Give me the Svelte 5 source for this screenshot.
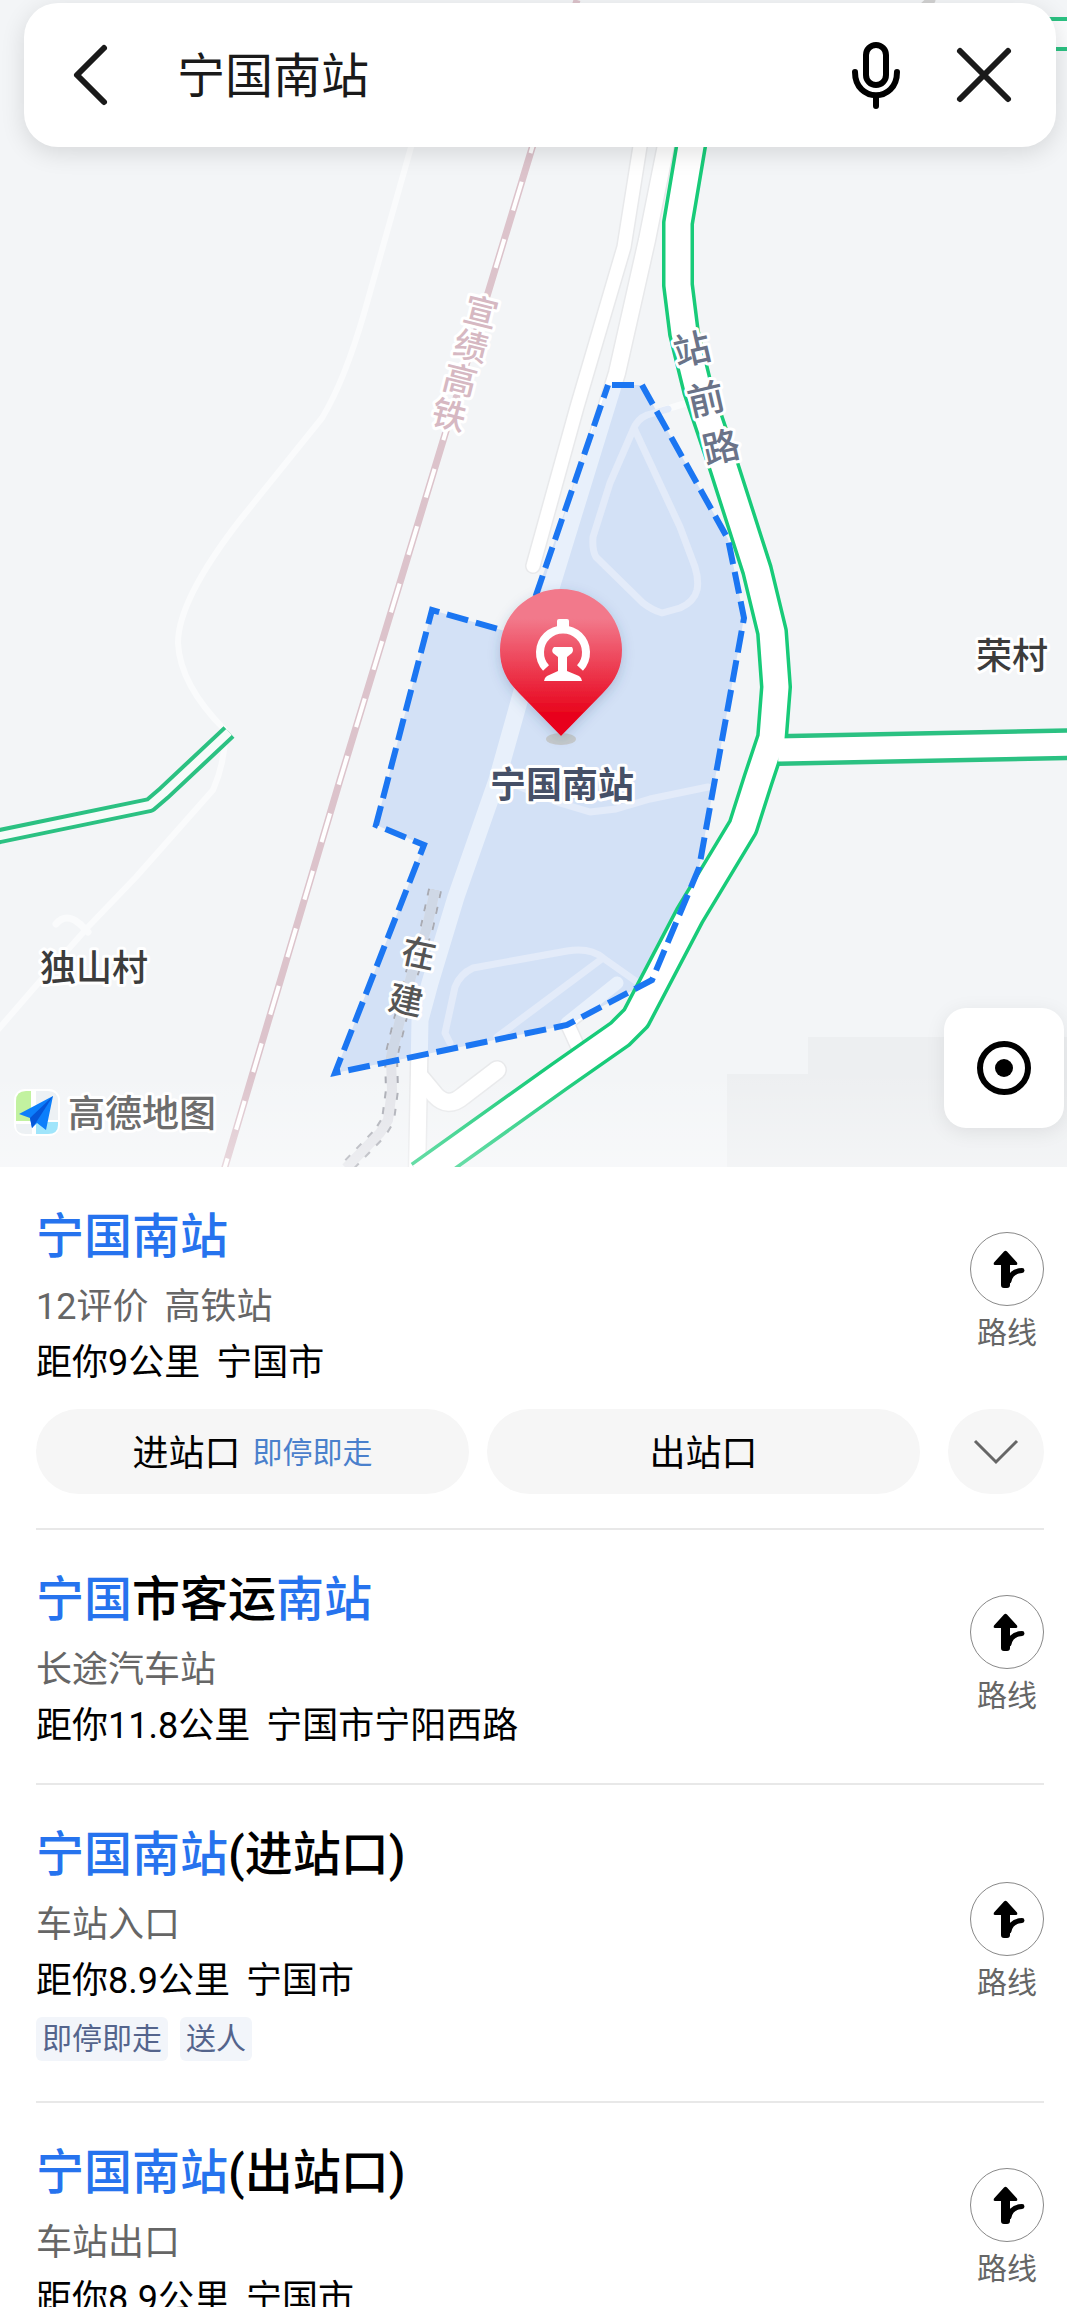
<script>
let query = '宁国南站';
let expanded = false;

const places = [
	{
		title: [['宁国南站', true]],
		info: ['12评价', '高铁站'],
		where: ['距你9公里', '宁国市'],
		gates: [{ name: '进站口', note: '即停即走' }, { name: '出站口' }],
	},
	{
		title: [['宁国', true], ['市客运', false], ['南站', true]],
		info: ['长途汽车站'],
		where: ['距你11.8公里', '宁国市宁阳西路'],
	},
	{
		title: [['宁国南站', true], ['(进站口)', false]],
		info: ['车站入口'],
		where: ['距你8.9公里', '宁国市'],
		tags: ['即停即走', '送人'],
	},
	{
		title: [['宁国南站', true], ['(出站口)', false]],
		info: ['车站出口'],
		where: ['距你8.9公里', '宁国市'],
	},
];

// street names are set one character at a time along the road
const roadLabels = [
	{ kind: 'rail', angle: 14, chars: [['宣', 481, 312], ['绩', 471, 346], ['高', 460, 380], ['铁', 449, 415]] },
	{ kind: 'street', angle: -13, chars: [['站', 692, 349], ['前', 706, 399], ['路', 721, 447]] },
	{ kind: 'planned', angle: 12, chars: [['在', 419, 953], ['建', 406, 1000]] },
];

const area = 'M608 385H642L728 539L744 618L699 868L652 980L567 1025L335 1073L424 845L376 825L432 610L522 636Z';
const mainRoad = 'M692 140L678 223V285L684 333L698 390L724 467L757 570L772 632L776 687L772 738L758 780L743 827L690 915L636 1018L620 1034L560 1076L420 1176';
const sideRoad = 'M778 750L1080 744';
const westRoad = 'M229 732L164 793L150 805L0 836L-10 838';
const roadA = 'M641 140L624 247L577 407L533 566';
const roadB = 'M667 140L647 240L617 373L551 588L497 780L456 897L430 983L420 1020L417 1175';
const hook = 'M420 1077L435 1095Q448 1109 463 1096L497 1070';
const spur = 'M617 983L567 1023L577 1045';
const planned = 'M435 890L427 927L412 973L400 1020L391 1057L392 1090L388 1120L380 1133L346 1168';
</script>

<main>
	<section class="map">
		<svg class="canvas" viewBox="0 0 1067 1167" role="img" aria-label="地图">
			<defs>
				<linearGradient id="pin" x1="0" y1="0" x2="0" y2="1">
					<stop offset="0.2" stop-color="#f2798b" />
					<stop offset="0.85" stop-color="#e8041c" />
				</linearGradient>
				<linearGradient id="fade" x1="0" y1="0" x2="0" y2="1">
					<stop offset="0" stop-color="#fff" stop-opacity="0" />
					<stop offset="1" stop-color="#fff" stop-opacity="0.35" />
				</linearGradient>
				<filter id="soft" x="-30%" y="-30%" width="160%" height="160%">
					<feDropShadow dx="0" dy="4" stdDeviation="6" flood-color="#33507a" flood-opacity="0.25" />
				</filter>
				<clipPath id="inside"><path d={area} /></clipPath>
			</defs>

			<rect width="1067" height="1167" fill="#f3f5f7" />
			<path d="M808 1037H1067V1167H727V1074H808Z" fill="#edeff1" />

			<g class="lane">
				<path d="M413 140L365 310Q345 380 322 418L240 520Q178 600 178 643Q180 685 225 730Q226 760 213 790L136 877L88 927L41 980L-4 1032" stroke="#fafbfc" stroke-width="6" />
				<path d="M56 924Q66 912 80 924L88 932" stroke="#fafbfc" stroke-width="7" />
				<path d="M931 0L918 12" stroke="#d2d2d2" stroke-width="9" />
			</g>

			<!-- railway -->
			<path d="M577 0L340 780L219 1187" class="rail" />
			<path d="M577 0L340 780L219 1187" class="rail-gap" />

			<g class="lane">
				<g stroke="#e8e9eb">
					<path d={roadA} stroke-width="16" />
					<path d={roadB} stroke-width="19" />
					<path d={hook} stroke-width="20" />
					<path d={spur} stroke-width="16" />
				</g>
				<g stroke="#fff">
					<path d={roadA} stroke-width="13" />
					<path d={roadB} stroke-width="16" />
					<path d={hook} stroke-width="17" />
					<path d={spur} stroke-width="13" />
				</g>
				<path d="M647 415L690 402" stroke="#fafbfc" stroke-width="7" />
			</g>

			<!-- station area -->
			<path d={area} fill="#d3e1f6" />
			<g class="lane" stroke="#e3ebf9" stroke-width="7">
				<path d="M668 409L647 415Q637 419 633 430L610 483L593 537Q592 550 596 557L643 603Q652 610 662 613L680 608Q694 602 697 590Q699 580 695 567L680 527L634 428" />
				<path d="M518 786L560 803L590 812L616 809L650 799L708 787" />
				<path d="M450 1043L445 1033L455 987Q460 974 473 968L567 951Q590 947 603 958L637 982M603 958L497 1037" />
			</g>
			<g class="lane" clip-path="url(#inside)" stroke="#e8f0fb">
				<path d={roadB} stroke-width="17" />
				<path d={spur} stroke-width="13" />
			</g>
			<path d={planned} fill="none" stroke="#a9abb3" stroke-width="14" stroke-dasharray="7 9" />
			<path d={planned} fill="none" stroke="#e3e4e9" stroke-width="10" />
			<path d={planned} fill="none" stroke="#cfd8e6" stroke-width="10" clip-path="url(#inside)" />

			<g class="green">
				<path d={sideRoad} stroke="#2bc182" stroke-width="32" />
				<path d={mainRoad} stroke="#18cb79" stroke-width="32" />
				<path d="M1030 34H1080" stroke="#2bc182" stroke-width="34" />
				<path d={sideRoad} stroke="#fff" stroke-width="23" />
				<path d={mainRoad} stroke="#fff" stroke-width="25" />
				<path d="M1030 34H1080" stroke="#fbfcfd" stroke-width="26" />
				<path d={westRoad} stroke="#2bc182" stroke-width="16" />
				<path d={westRoad} stroke="#f6fbf9" stroke-width="8" />
			</g>
			<path d={area} class="outline" />

			{#each roadLabels as label}
				<g class={'label ' + label.kind}>
					{#each label.chars as [char, x, y]}
						<text transform={`translate(${x} ${y}) rotate(${label.angle})`} dy="0.37em">{char}</text>
					{/each}
				</g>
			{/each}
			<text class="label village" x="1012" y="669">荣村</text>
			<text class="label village" x="94" y="981">独山村</text>

			<!-- pin -->
			<ellipse cx="561" cy="739" rx="15" ry="6" fill="#c5c9cb" />
			<path d="M561 736L519 693C506 680 500 667 500 650A61 61 0 0 1 622 650C622 667 616 680 603 693Z" fill="url(#pin)" filter="url(#soft)" />
			<path d="M546 668A23 23 0 1 1 580 668" fill="none" stroke="#fff" stroke-width="8" />
			<path d="M557 621Q557 619 559 619H567Q569 619 569 621V630H557Z" fill="#fff" />
			<path d="M554 647H572Q574 650 572 653L567 657V671L579 676Q582 678 582 681H544Q544 678 547 676L558 671V657L553 653Q551 650 554 647Z" fill="#fff" />
			<text class="label station" x="562" y="798">宁国南站</text>

			<rect y="1070" width="1067" height="97" fill="url(#fade)" />

			<!-- provider logo -->
			<rect x="14" y="1089" width="46" height="47" rx="11" fill="#fff" />
			<path d="M26 1091H31V1121H16V1101Q16 1091 26 1091Z" fill="#c2f2a0" />
			<path d="M36 1091H48Q58 1091 58 1101V1120H36Z" fill="#edf1f4" />
			<path d="M16 1124H32V1134H26Q16 1134 16 1126Z" fill="#edf1f4" />
			<path d="M36 1122H58V1125Q58 1134 48 1134H36Z" fill="#a0e5fb" />
			<path d="M53 1096L19 1114L30 1118L32 1128L37 1123L46 1130Z" fill="#0c7ffb" />
			<path d="M53 1096L30 1118L32 1128L37 1121Z" fill="#0556d8" />
			<text class="label brand" x="142" y="1127">高德地图</text>
		</svg>

		<form class="search" on:submit|preventDefault>
			<button type="button" aria-label="返回">
				<svg width="64" height="64" viewBox="0 0 64 64"><path d="M44 5L17 32L44 59" class="line" /></svg>
			</button>
			<input type="text" aria-label="搜索地点" bind:value={query} />
			<button type="button" aria-label="语音搜索">
				<svg width="64" height="70" viewBox="0 0 64 70">
					<rect x="22" y="5" width="20" height="40" rx="10" fill="none" stroke="#000" stroke-width="6" />
					<path d="M11 32C11 63 53 63 53 32M32 56V66" fill="none" stroke="#000" stroke-width="6" stroke-linecap="round" />
				</svg>
			</button>
			<button type="button" class="clear" aria-label="清除" on:click={() => (query = '')}>
				<svg width="64" height="64" viewBox="0 0 64 64"><path d="M8 8L56 56M56 8L8 56" class="line" /></svg>
			</button>
		</form>

		<button class="locate" type="button" aria-label="定位">
			<svg width="56" height="56" viewBox="0 0 56 56">
				<circle cx="28" cy="28" r="24" fill="none" stroke="#000" stroke-width="6" />
				<circle cx="28" cy="28" r="9" />
			</svg>
		</button>
	</section>

	<ul class="places">
		{#each places as place}
			<li class="place">
				<div class="head">
					<div class="text">
						<h2>{#each place.title as [part, hit]}<span class:hit>{part}</span>{/each}</h2>
						<p class="info">{#each place.info as part}<span>{part}</span>{/each}</p>
						<p>{#each place.where as part}<span>{part}</span>{/each}</p>
						{#if place.tags}
							<div class="tags">
								{#each place.tags as tag}<span>{tag}</span>{/each}
							</div>
						{/if}
					</div>
					<button class="route" type="button">
						<span class="ring">
							<svg width="48" height="48" viewBox="0 0 48 48">
								<path d="M21 6.500Q22.500 5 24 6.500L34 17.500Q35 20 33 20H27V40Q27 43 24 43H21Q18 43 18 40V20H12Q10 20 11 17.500Z" />
								<path d="M26 36Q28 26 39 25.500" fill="none" stroke="#000" stroke-width="5" stroke-linecap="round" />
							</svg>
						</span>
						路线
					</button>
				</div>
				{#if place.gates}
					<div class="gates">
						{#each place.gates as gate}
							<button class="gate" type="button">
								{gate.name}
								{#if gate.note}<small>{gate.note}</small>{/if}
							</button>
						{/each}
						<button class="more" type="button" aria-label="更多" aria-expanded={expanded} on:click={() => (expanded = !expanded)}>
							<svg width="48" height="32" viewBox="0 0 48 32"><path d="M3 5L24 26L45 5" fill="none" stroke="#666" stroke-width="3" /></svg>
						</button>
					</div>
				{/if}
			</li>
		{/each}
	</ul>
</main>

<style>
:global(body) {
	background: #fff;
	font-family: Roboto, "Noto Sans CJK SC", sans-serif;
	color: #000;
}
:global(html) {
	overflow: hidden;
}
main {
	height: 100vh;
	overflow: hidden;
}
button {
	border: 0;
	padding: 0;
	background: none;
	font: inherit;
	color: inherit;
	cursor: pointer;
}
svg {
	display: block;
}

.map {
	position: relative;
}
.canvas {
	width: 100%;
	height: auto;
}
.lane path, .green path {
	fill: none;
	stroke-linejoin: round;
}
.lane path {
	stroke-linecap: round;
}
.rail, .rail-gap {
	fill: none;
	stroke: #dcc3cb;
	stroke-width: 7;
}
.rail-gap {
	stroke: #fff;
	stroke-width: 4;
	stroke-dasharray: 30 30;
	stroke-dashoffset: -10;
}
.outline {
	fill: none;
	stroke: #1b76f2;
	stroke-width: 6;
	stroke-dasharray: 22 8;
	stroke-dashoffset: -4;
}
.label {
	text-anchor: middle;
	paint-order: stroke;
	stroke: #fff;
	stroke-width: 6px;
	stroke-linejoin: round;
}
.rail.label {
	fill: #d6b8c2;
	stroke: #fff;
	stroke-width: 6px;
	font-size: 34px;
	font-weight: 500;
}
.street {
	fill: #6a7388;
	font-size: 37px;
	font-weight: 500;
}
.planned {
	fill: #555;
	font-size: 34px;
	font-weight: 500;
}
.village {
	fill: #3c3c3c;
	font-size: 36px;
	font-weight: 500;
}
.station {
	fill: #465067;
	font-size: 36px;
	font-weight: 700;
}
.brand {
	fill: #6d6d6d;
	font-size: 37px;
	font-weight: 500;
}

.search {
	position: absolute;
	top: 3px;
	left: 24px;
	right: 11px;
	height: 144px;
	box-sizing: border-box;
	padding: 0 40px 0 36px;
	display: flex;
	align-items: center;
	background: #fff;
	border-radius: 34px;
	box-shadow: 0 6px 24px rgba(0, 0, 0, 0.12);
}
.search input {
	flex: 1;
	min-width: 0;
	margin-left: 53px;
	padding: 0 0 6px;
	border: 0;
	outline: 0;
	background: none;
	font: inherit;
	font-size: 48px;
	color: #1a1a1a;
}
.clear {
	margin-left: 44px;
}
.line {
	fill: none;
	stroke: #1a1a1a;
	stroke-width: 6;
	stroke-linecap: round;
	stroke-linejoin: round;
}
.locate {
	position: absolute;
	right: 3px;
	bottom: 39px;
	width: 120px;
	height: 120px;
	display: grid;
	place-items: center;
	background: #fff;
	border-radius: 22px;
	box-shadow: 0 4px 20px rgba(0, 0, 0, 0.08);
}

.places {
	list-style: none;
	margin: 0;
	padding: 0 23px 0 36px;
}
.place {
	border-bottom: 2px solid #e8e8e8;
}
.head {
	display: flex;
	align-items: center;
	justify-content: space-between;
}
.text {
	padding: 38px 0 29px;
}
h2 {
	margin: 0 0 10px;
	font-size: 48px;
	line-height: 64px;
	font-weight: 500;
}
.hit {
	color: #2673ee;
}
p {
	display: flex;
	gap: 16px;
	margin: 0;
	font-size: 36px;
	line-height: 56px;
}
.info {
	color: #666;
}
.tags {
	display: flex;
	gap: 12px;
	margin: 8px 0 11px;
}
.tags span {
	padding: 0 6px;
	border-radius: 6px;
	background: #f2f5fa;
	font-size: 30px;
	line-height: 44px;
	color: #54648c;
}
.route {
	display: flex;
	flex-direction: column;
	align-items: center;
	gap: 5px;
	font-size: 30px;
	line-height: 44px;
	color: #666;
}
.ring {
	width: 72px;
	height: 72px;
	display: grid;
	place-items: center;
	border: 1px solid #888;
	border-radius: 50%;
}
.gates {
	display: flex;
	gap: 18px;
	margin-top: -11px;
	padding-bottom: 34px;
}
.gate, .more {
	height: 85px;
	border-radius: 43px;
	background: #f6f6f6;
}
.gate {
	flex: 1;
	display: flex;
	align-items: center;
	justify-content: center;
	gap: 12px;
	padding-bottom: 3px;
	font-size: 36px;
}
.gate small {
	font-size: 30px;
	color: #4a80cc;
}
.more {
	width: 96px;
	margin-left: 10px;
	display: grid;
	place-items: center;
}
</style>
